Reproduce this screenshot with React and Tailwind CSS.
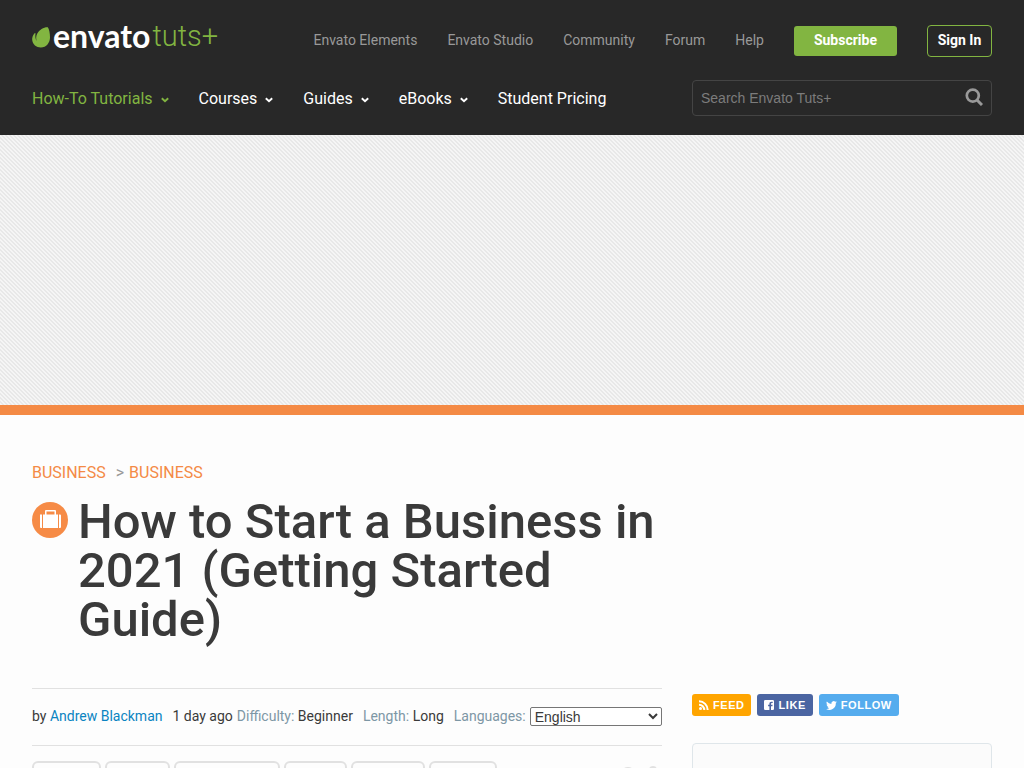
import React from "react";

const topLinks = ["Envato Elements", "Envato Studio", "Community", "Forum", "Help"];
const menu = ["Courses", "Guides", "eBooks"];

function Chevron() {
  return (
    <svg viewBox="0 0 8 6" className="mt-[2px] h-[6px] w-2" fill="none" stroke="currentColor" strokeWidth="1.9" aria-hidden="true">
      <path d="M0.8 1.2 4 4.2 7.2 1.2" />
    </svg>
  );
}

function Logo() {
  return (
    <a href="#home" aria-label="Envato Tuts+" className="mb-2 flex h-8 items-center">
      <svg viewBox="0 0 18 21" className="mt-[2px] mr-[3px] h-[21px] w-[18px]" aria-hidden="true">
        <path fill="#82b541" d="M15.800.3C12 0 7.300 2.800 5.300 6.600 3.800 9.500 4 12 4.600 14 3.600 12.500 3 9.500 3.500 6.500 3.500 5.800 3 5.800 2.600 6.200.8 8 0 10.500.2 13c.4 4.500 4.100 7.500 8.600 7.500 5.700 0 9.200-5 9.200-10C18 6 17.200 2.400 15.800.3Z" />
      </svg>
      <span className="font-['Lato'] text-[32px] leading-8 font-bold text-white">envato</span>
      <span className="ml-[2px] font-['Roboto'] text-[29px] leading-8 font-light text-[#82b541]">tuts+</span>
    </a>
  );
}

function Header() {
  return (
    <header className="bg-[#282828] px-8 pt-5 pb-[19px]">
      <div className="flex h-10 items-center justify-between">
        <Logo />
        <nav className="mt-[2px] flex items-center gap-[30px] text-sm text-[#999]">
          {topLinks.map((t) => (
            <a key={t} href="#top" className="pb-[2px]">{t}</a>
          ))}
          <a href="#subscribe" className="flex h-[30px] items-center rounded-[3px] bg-[#82b541] px-5 pb-[2px] font-bold text-white">Subscribe</a>
          <a href="#signin" className="flex h-8 w-[65px] items-center justify-center rounded border border-[#82b541] pb-[2px] font-bold text-white">Sign In</a>
        </nav>
      </div>
      <div className="mt-5 flex h-9 items-center justify-between">
        <nav className="mt-[2px] flex items-center gap-[30px] text-base text-white">
          <a href="#tutorials" className="flex items-center gap-2 text-[#82b541]">How-To Tutorials<Chevron /></a>
          {menu.map((t) => (
            <a key={t} href="#menu" className="flex items-center gap-2">{t}<Chevron /></a>
          ))}
          <a href="#students">Student Pricing</a>
        </nav>
        <form className="flex h-9 w-[300px] items-center rounded border border-[#444] px-2">
          <input type="search" aria-label="Search" placeholder="Search Envato Tuts+" className="min-w-0 flex-1 bg-transparent font-['Liberation_Sans',sans-serif] text-sm text-white outline-none placeholder:text-[#7c7c7c]" />
          <button type="button" aria-label="Search" className="pb-[2px] text-[#999]">
            <svg viewBox="0 0 18 18" className="h-[18px] w-[18px]" fill="none" stroke="currentColor" aria-hidden="true">
              <circle cx="7.800" cy="7.600" r="6" strokeWidth="2.700" />
              <path d="m12 12 5 5" strokeWidth="3" />
            </svg>
          </button>
        </form>
      </div>
    </header>
  );
}

function SuitcaseBadge() {
  return (
    <svg viewBox="0 0 36 36" className="mt-[5px] h-9 w-9 shrink-0" aria-hidden="true">
      <circle cx="18" cy="18" r="18" fill="#f68b46" />
      <g fill="#fff">
        <path d="M8 12.500h2V26H9a1 1 0 0 1-1-1ZM27 12.500h1a1 1 0 0 1 1 1V25a1 1 0 0 1-1 1h-1Z" />
        <path d="M11 12.500h2V9a1 1 0 0 1 1-1h9a1 1 0 0 1 1 1v3.500h2V26H11ZM14.500 9.500v3h8v-3Z" fillRule="evenodd" />
      </g>
    </svg>
  );
}

function FeedIcon() {
  return (
    <svg viewBox="0 0 10 10" className="h-[10px] w-[10px]" fill="none" stroke="#fff" strokeWidth="2" aria-hidden="true">
      <circle cx="1.500" cy="8.500" r="1.500" fill="#fff" stroke="none" />
      <path d="M0 4.700A5.300 5.300 0 0 1 5.300 10M0 1.300A8.700 8.700 0 0 1 8.700 10" />
    </svg>
  );
}

function LikeIcon() {
  return (
    <svg viewBox="0 0 10 10" className="h-[10px] w-[10px]" aria-hidden="true">
      <path fill="#fff" fillRule="evenodd" d="M1.200 0h7.600Q10 0 10 1.200v7.600Q10 10 8.800 10H7V6.200h1.400l.2-1.500H7v-.8c0-.5.200-.8.800-.8h.9V1.700H7.400c-1.300 0-2 .7-2 2v1H4.100v1.500h1.300V10H1.200Q0 10 0 8.800V1.200Q0 0 1.200 0Z" />
    </svg>
  );
}

function BirdIcon() {
  return (
    <svg viewBox="0 2 24 20" className="h-[9px] w-[11px]" aria-hidden="true">
      <path fill="#fff" d="M24 4.600a10 10 0 0 1-2.800.8 5 5 0 0 0 2.200-2.700 10 10 0 0 1-3.100 1.200 4.900 4.900 0 0 0-8.400 4.500A14 14 0 0 1 1.700 3.100a4.900 4.900 0 0 0 1.500 6.600 5 5 0 0 1-2.200-.6 4.900 4.900 0 0 0 3.900 4.900 5 5 0 0 1-2.200.1 4.900 4.900 0 0 0 4.600 3.400A9.900 9.900 0 0 1 0 19.500 14 14 0 0 0 21.500 7.100 10 10 0 0 0 24 4.600Z" />
    </svg>
  );
}

export default function App() {
  return (
    <div className="h-screen overflow-hidden bg-[#fdfdfd] font-['Roboto',sans-serif] text-[#3a3a3a]">
      <Header />
      <div className="h-[270px] bg-[#f5f5f5] bg-[linear-gradient(45deg,#e8e8e8_25%,transparent_25%,transparent_50%,#e8e8e8_50%,#e8e8e8_75%,transparent_75%)] bg-[length:4px_4px]" />
      <div className="h-[10px] bg-[#f48a45]" />
      <main className="px-8 pt-[46px]">
        <nav aria-label="Breadcrumb" className="flex items-center text-base text-[#f48a45]">
          <a href="#business">BUSINESS</a>
          <span className="mr-[5px] ml-[10px] text-[#999]">&gt;</span>
          <a href="#business-sub">BUSINESS</a>
        </nav>
        <div className="flex items-start gap-[30px]">
          <article className="min-w-0 flex-1">
            <div className="mt-3 flex gap-[10px]">
              <SuitcaseBadge />
              <h1 className="text-[49px] leading-[49px] font-medium">How to Start a Business in 2021 (Getting Started Guide)</h1>
            </div>
            <div className="mt-11 flex h-[58px] items-center border-y border-[#e1e1e1] pb-[2px] text-sm whitespace-nowrap text-[#3a3a3a]">
              <span>by <a href="#author" className="text-[#0a84c1]">Andrew Blackman</a></span>
              <span className="ml-[10px]">1 day ago</span>
              <span className="ml-1"><span className="text-[#7d97a5]">Difficulty:</span> Beginner</span>
              <span className="ml-[10px]"><span className="text-[#7d97a5]">Length:</span> Long</span>
              <label htmlFor="lang" className="ml-[10px] text-[#7d97a5]">Languages:</label>
              <select id="lang" className="ml-1 h-[19px] min-w-0 flex-1 rounded-[2px] border border-[#767676] bg-white font-['Liberation_Sans',sans-serif] text-sm leading-4 text-[#3a3a3a]">
                <option>English</option>
              </select>
            </div>
            <div className="mt-[15px] flex gap-1">
              <div className="h-9 w-[69px] rounded-md border-2 border-[#e1e1e1]" />
              <div className="h-9 w-[65px] rounded-md border-2 border-[#e1e1e1]" />
              <div className="h-9 w-[106px] rounded-md border-2 border-[#e1e1e1]" />
              <div className="h-9 w-[63px] rounded-md border-2 border-[#e1e1e1]" />
              <div className="h-9 w-[74px] rounded-md border-2 border-[#e1e1e1]" />
              <div className="h-9 w-[68px] rounded-md border-2 border-[#e1e1e1]" />
              <svg viewBox="0 0 40 20" className="mt-[5px] mr-1 ml-auto h-5 w-10" fill="#e1e1e1" aria-hidden="true">
                <circle cx="10" cy="9" r="8" />
                <circle cx="35" cy="4" r="4" />
              </svg>
            </div>
          </article>
          <aside className="w-[300px] shrink-0 pt-[209px]">
            <div className="flex gap-[6px] font-['Liberation_Sans',sans-serif] text-[11px] font-bold tracking-wider text-white">
              <a href="#feed" className="flex h-[22px] items-center gap-1 rounded-[3px] bg-[#ffa500] pr-[6px] pl-[7px]"><FeedIcon />FEED</a>
              <a href="#like" className="flex h-[22px] items-center gap-[5px] rounded-[3px] bg-[#4b65a2] px-[7px]"><LikeIcon />LIKE</a>
              <a href="#follow" className="flex h-[22px] items-center gap-1 rounded-[3px] bg-[#55acee] px-[7px]"><BirdIcon />FOLLOW</a>
            </div>
            <div className="mt-[27px] h-[280px] rounded border border-[#dfe6ea] bg-[#fbfbfb]" />
          </aside>
        </div>
      </main>
    </div>
  );
}
